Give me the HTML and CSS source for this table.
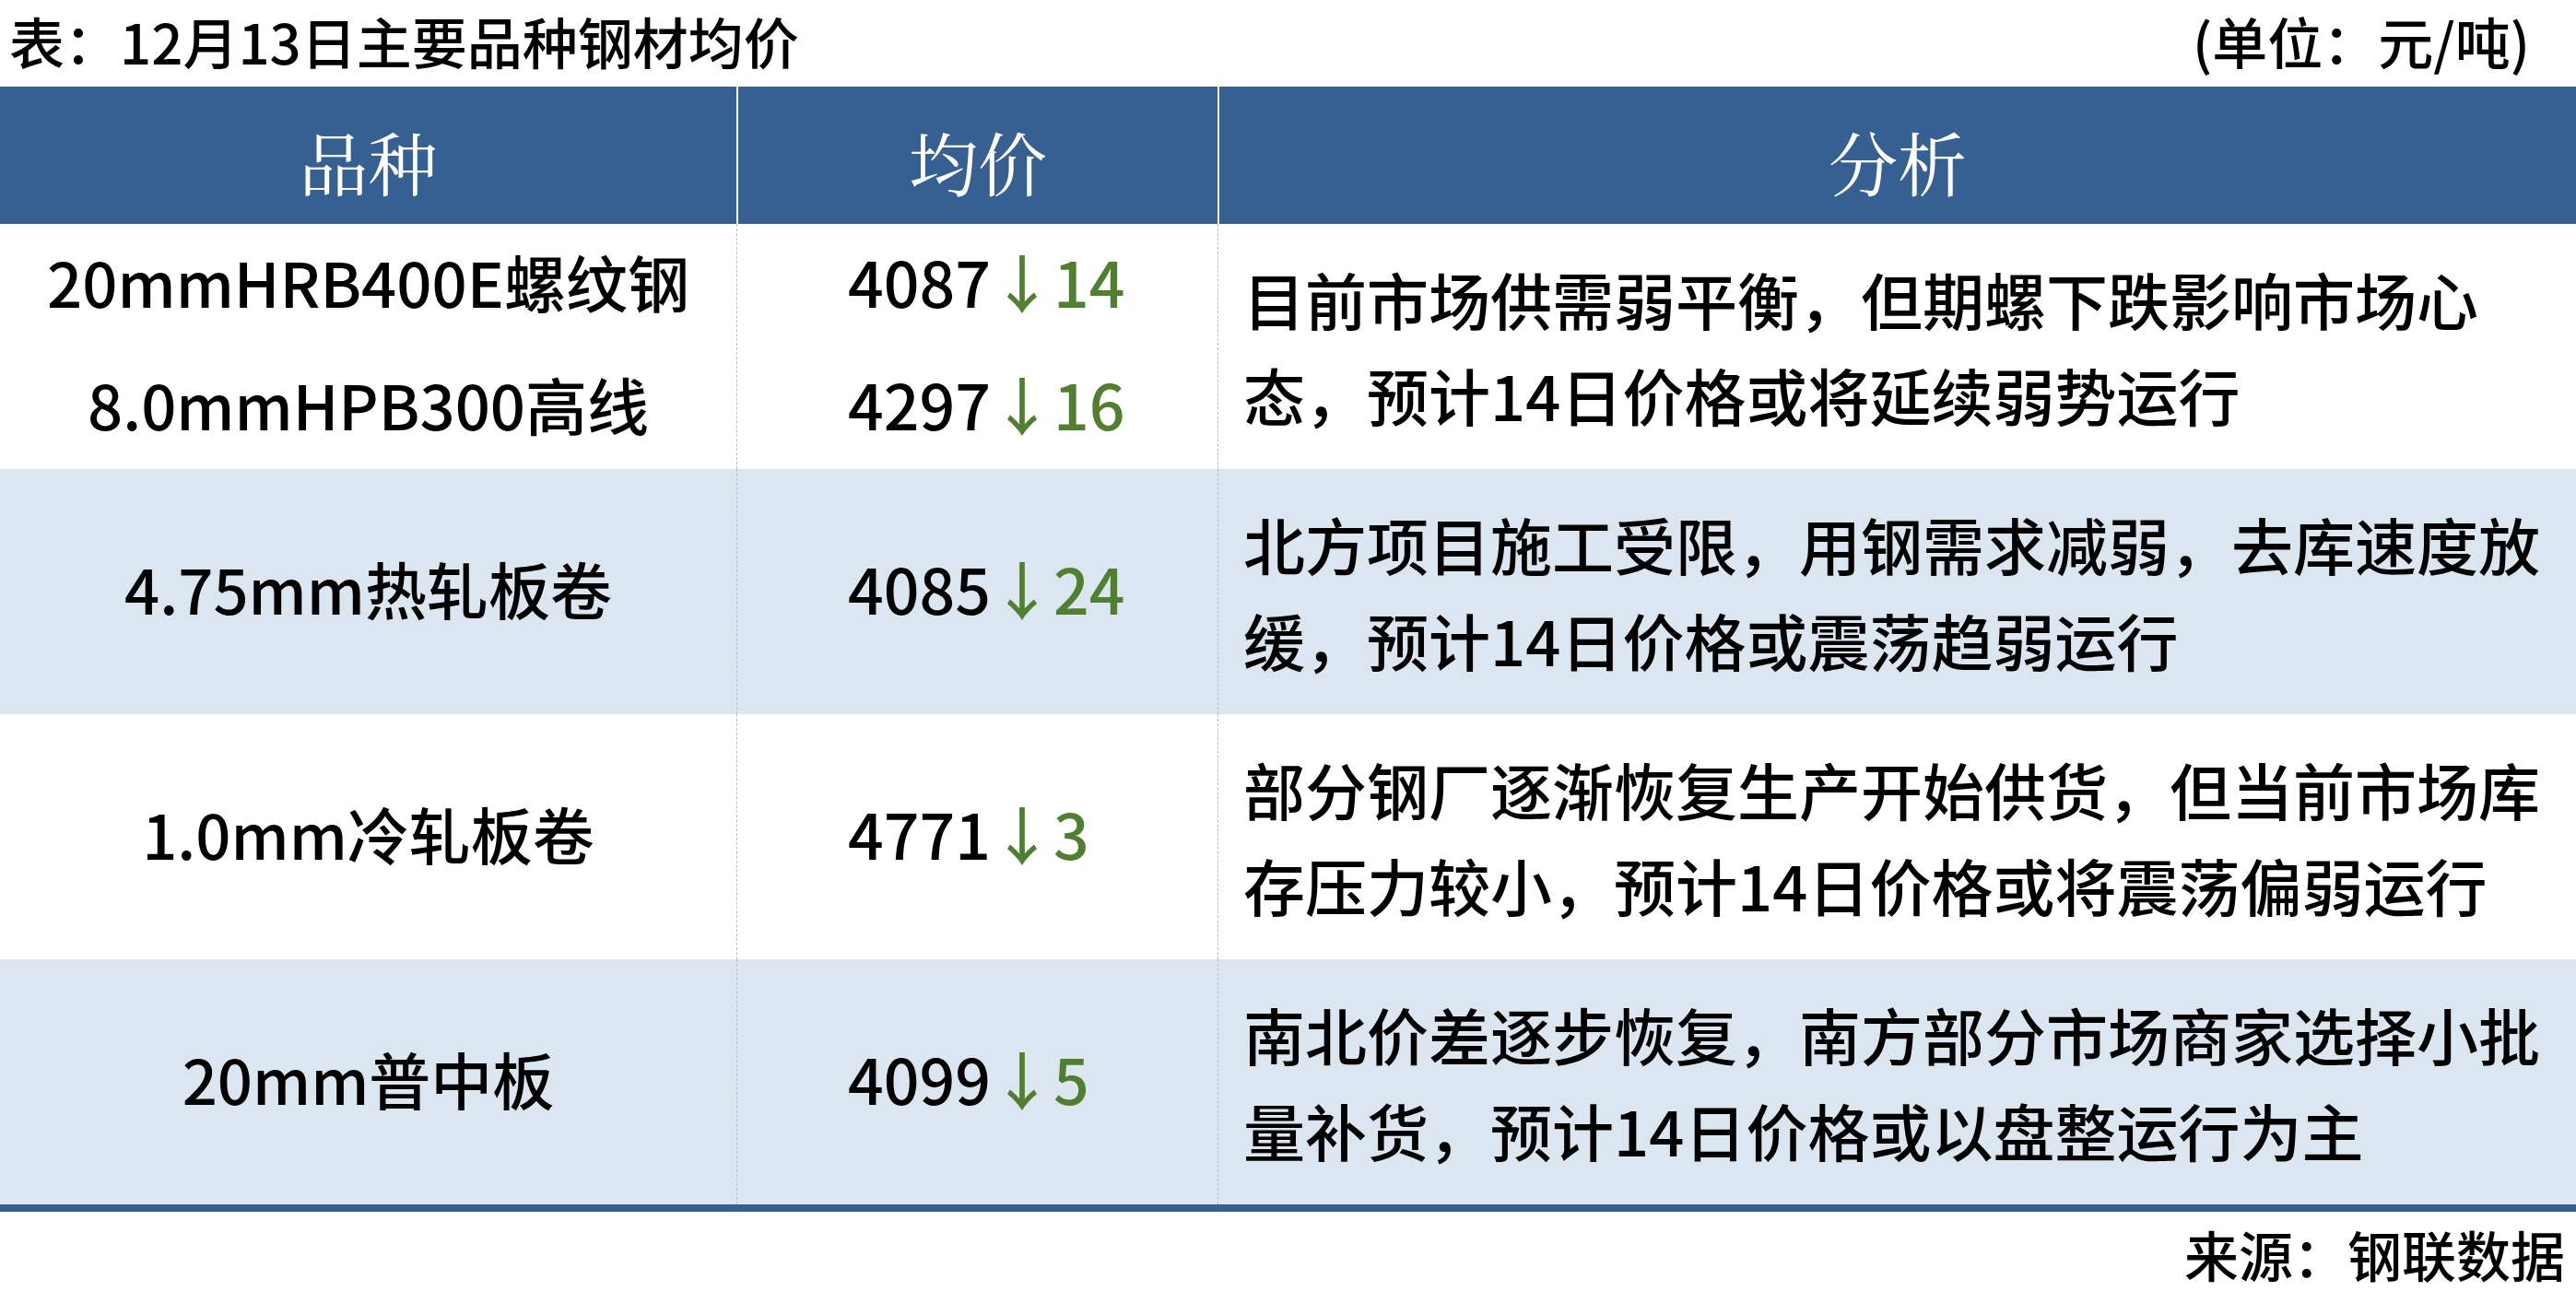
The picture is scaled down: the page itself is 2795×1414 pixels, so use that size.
FILE: index.html
```html
<!DOCTYPE html>
<html lang="zh-CN">
<head>
<meta charset="utf-8">
<title>12月13日主要品种钢材均价</title>
<link rel="stylesheet" href="styles.css">
</head>
<body>
<div class="sheet">
  <div class="caption">
    <span class="title">表：12月13日主要品种钢材均价</span>
    <span class="unit">(单位：元/吨)</span>
  </div>
  <div class="table">
    <div class="row head">
      <div class="cell">品种</div>
      <div class="cell">均价</div>
      <div class="cell">分析</div>
    </div>
    <div class="row">
      <div class="cell name">
        <div class="item">20mmHRB400E螺纹钢</div>
        <div class="item">8.0mmHPB300高线</div>
      </div>
      <div class="cell price">
        <div class="item">4087<span class="down">↓14</span></div>
        <div class="item">4297<span class="down">↓16</span></div>
      </div>
      <div class="cell note">目前市场供需弱平衡，但期螺下跌影响市场心<br>态，预计14日价格或将延续弱势运行</div>
    </div>
    <div class="row alt">
      <div class="cell name"><div class="item">4.75mm热轧板卷</div></div>
      <div class="cell price"><div class="item">4085<span class="down">↓24</span></div></div>
      <div class="cell note">北方项目施工受限，用钢需求减弱，去库速度放<br>缓，预计14日价格或震荡趋弱运行</div>
    </div>
    <div class="row">
      <div class="cell name"><div class="item">1.0mm冷轧板卷</div></div>
      <div class="cell price"><div class="item">4771<span class="down">↓3</span></div></div>
      <div class="cell note">部分钢厂逐渐恢复生产开始供货，但当前市场库<br>存压力较小，预计14日价格或将震荡偏弱运行</div>
    </div>
    <div class="row alt">
      <div class="cell name"><div class="item">20mm普中板</div></div>
      <div class="cell price"><div class="item">4099<span class="down">↓5</span></div></div>
      <div class="cell note">南北价差逐步恢复，南方部分市场商家选择小批<br>量补货，预计14日价格或以盘整运行为主</div>
    </div>
  </div>
  <div class="source">来源：钢联数据</div>
</div>
</body>
</html>
```
FILE: styles.css
```css
html, body {
  margin: 0;
  padding: 0;
  background: #ffffff;
}

body {
  font-family: "Noto Sans CJK SC", "Noto Sans", sans-serif;
  font-weight: 500;
  color: #000000;
}

.sheet {
  width: 2795px;
}

.caption {
  height: 94px;
  box-sizing: border-box;
  padding: 0 50px 6px 10px;
  display: flex;
  align-items: center;
  justify-content: space-between;
  font-size: 60px;
  line-height: 1;
}

.table {
  border-bottom: 8px solid #366092;
}

.row {
  display: grid;
  grid-template-columns: 799px 522px 1fr;
  height: 266px;
  background: #ffffff;
}

.row.alt {
  background: #dce6f1;
}

.row.head {
  height: 149px;
  background: #366092;
}

.cell {
  display: flex;
  flex-direction: column;
  justify-content: center;
  min-width: 0;
}

.row .cell + .cell {
  border-left: 1px dashed #bfbfbf;
}

.row.head .cell + .cell {
  border-left: 2px solid #ffffff;
}

.head .cell {
  align-items: center;
  color: #ffffff;
  font-family: "Noto Serif CJK SC", "Noto Sans CJK SC", serif;
  font-weight: 400;
  font-size: 75px;
  padding-top: 12px;
  box-sizing: border-box;
}

.name {
  align-items: center;
  font-size: 67px;
}

.price {
  align-items: flex-start;
  padding-left: 120px;
  font-size: 68px;
}

.item {
  line-height: 133px;
  height: 133px;
  white-space: nowrap;
}

.name .item, .price .item {
  position: relative;
  top: -5px;
}

.down {
  color: #4f7f2f;
}

.note {
  font-size: 67px;
  line-height: 104px;
  padding-left: 27px;
  white-space: nowrap;
}

.source {
  height: 90px;
  display: flex;
  align-items: center;
  justify-content: flex-end;
  font-size: 59px;
  line-height: 1;
  padding-right: 12px;
}
```
